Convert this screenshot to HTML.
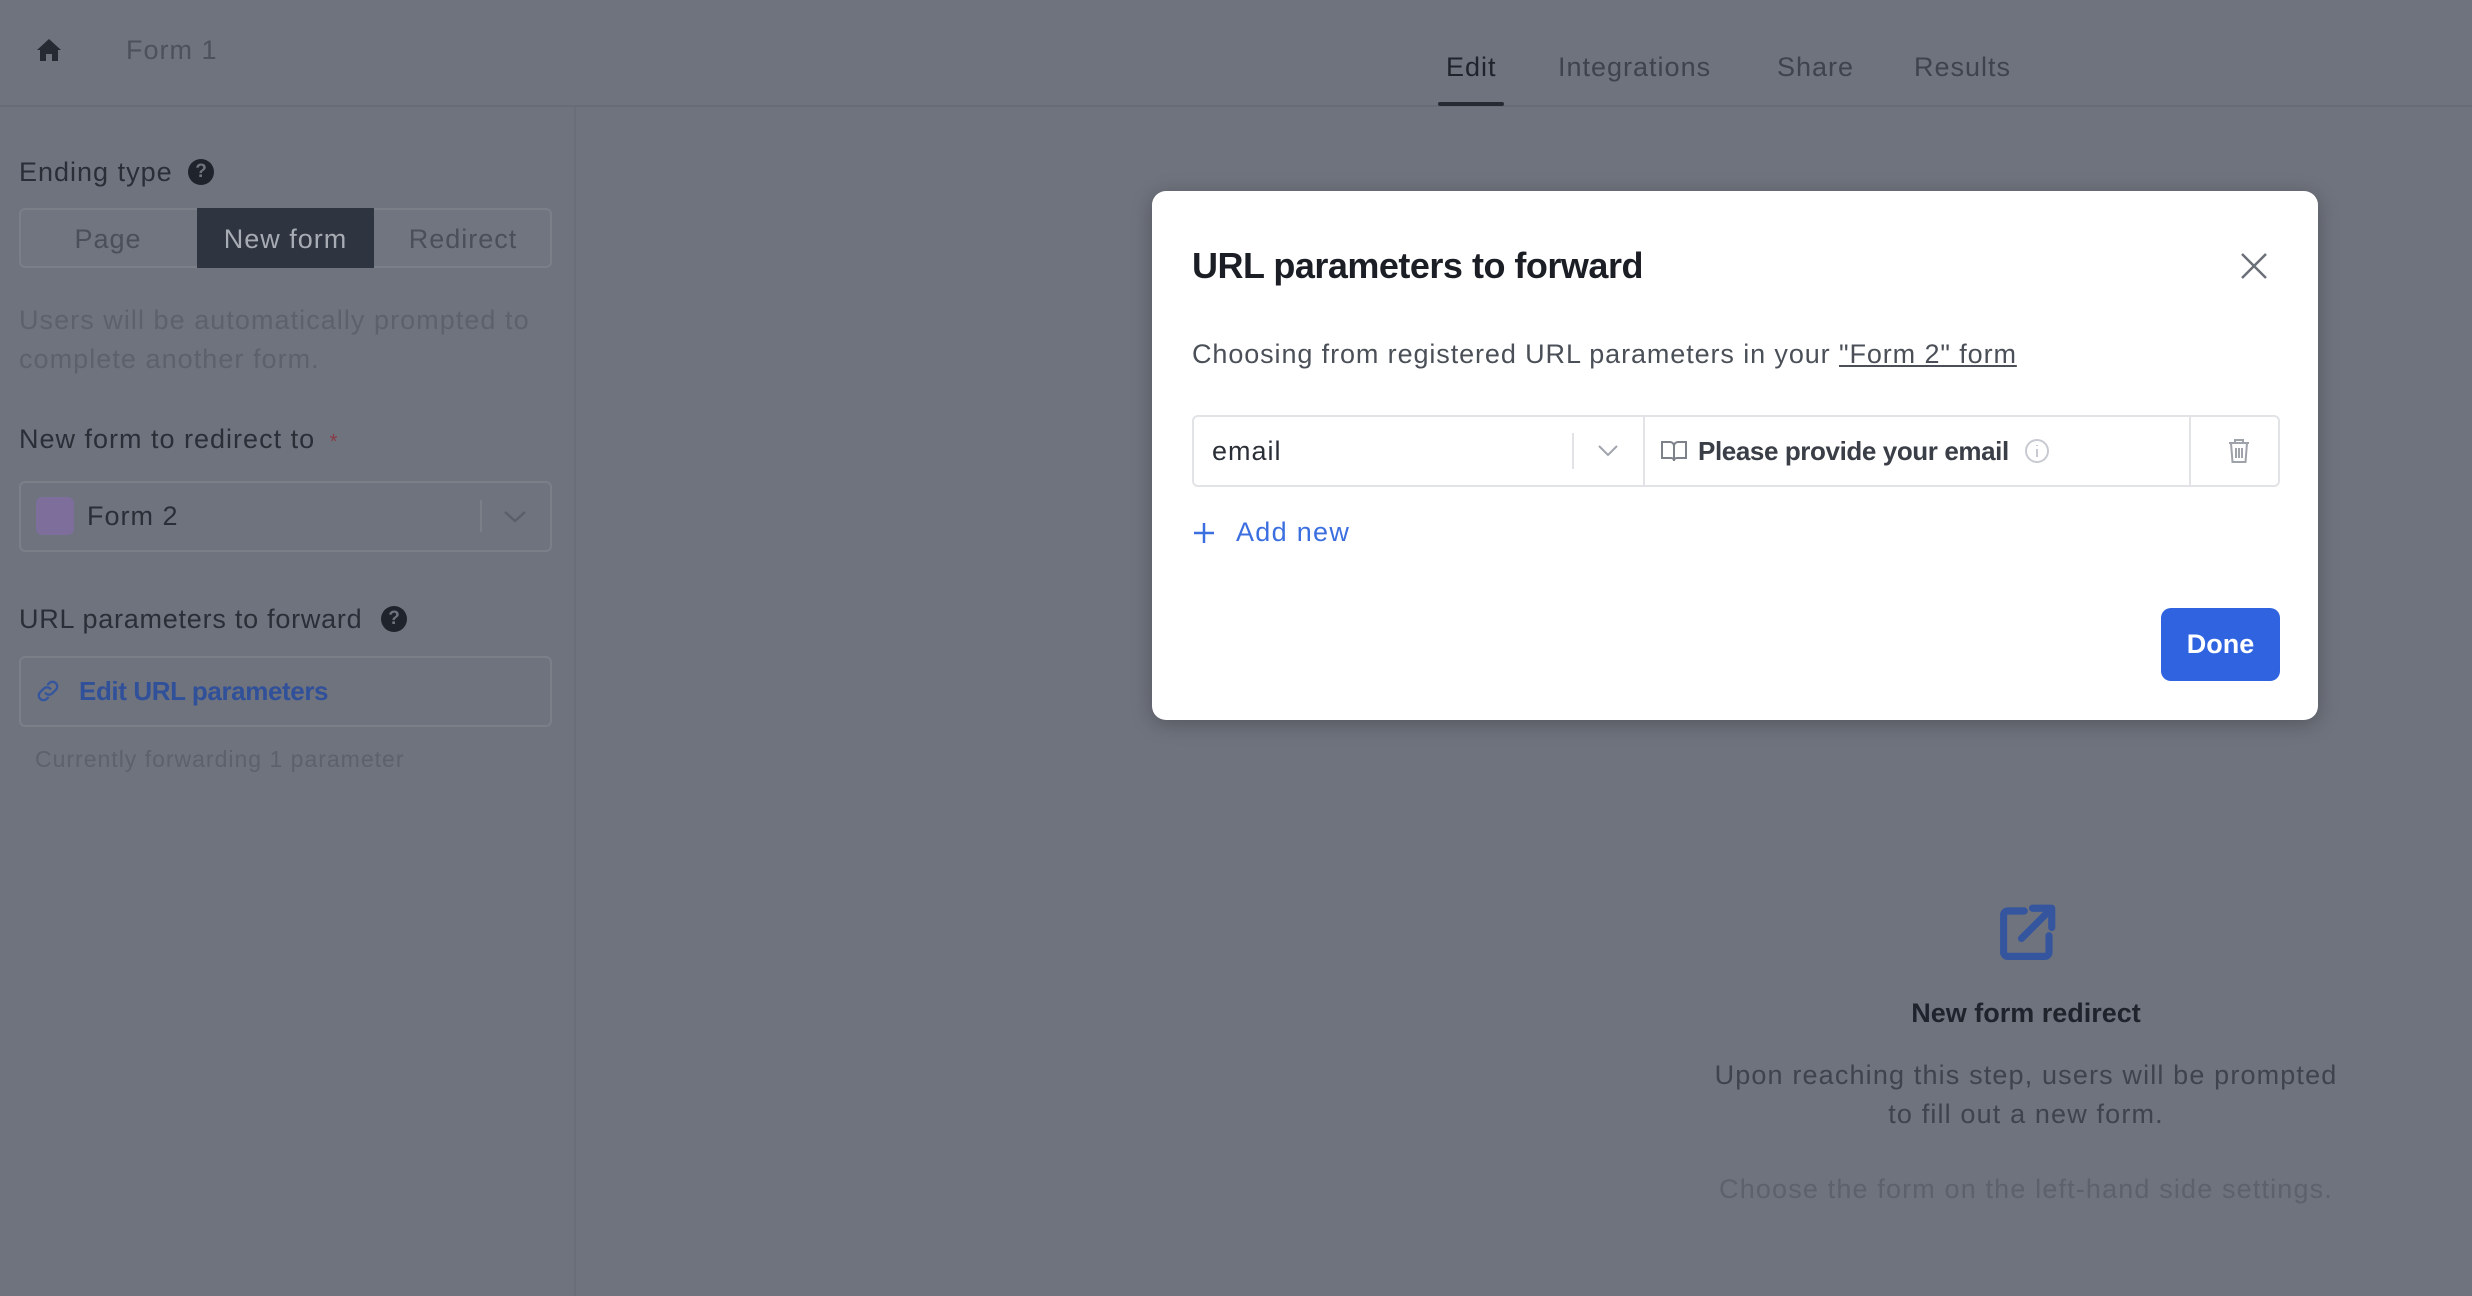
<!DOCTYPE html>
<html><head><meta charset="utf-8"><style>
*{box-sizing:border-box;margin:0;padding:0}
body{width:2472px;height:1296px;overflow:hidden;background:#6f737d;font-family:"Liberation Sans",sans-serif;position:relative;color:#23272f;letter-spacing:1px}
.a{position:absolute;white-space:nowrap}
b,.b{letter-spacing:0}
</style></head><body>
<div class="a" style="left:0;top:105px;width:2472px;height:2px;background:#686c76"></div>
<div class="a" style="left:574px;top:107px;width:2px;height:1189px;background:#6a6e78"></div>
<svg class="a" style="left:36px;top:38px" width="26" height="24" viewBox="0 0 26 24"><path d="M13 1 L1 12 H4 V23 H10 V16 H16 V23 H22 V12 H25 Z" fill="#262a33"/></svg>
<div class="a" style="left:126px;top:35px;font-size:27px;color:#4c515b">Form 1</div>
<div class="a" style="left:1446px;top:52px;font-size:27px;color:#1f232b">Edit</div>
<div class="a" style="left:1438px;top:102px;width:66px;height:4px;background:#262a33;border-radius:2px"></div>
<div class="a" style="left:1558px;top:52px;font-size:27px;color:#3e434d">Integrations</div>
<div class="a" style="left:1777px;top:52px;font-size:27px;color:#3e434d">Share</div>
<div class="a" style="left:1914px;top:52px;font-size:27px;color:#3e434d">Results</div>

<div class="a" style="left:19px;top:157px;font-size:27px;color:#2a2e37">Ending type</div>
<div class="a b" style="left:188px;top:159px;width:26px;height:26px;border-radius:50%;background:#1f232b;color:#6f737d;font-size:19px;font-weight:bold;text-align:center;line-height:26px">?</div>
<div class="a" style="left:19px;top:208px;width:533px;height:60px;border:2px solid #7b7f88;border-radius:6px;background:#71757f"></div>
<div class="a" style="left:197px;top:208px;width:177px;height:60px;background:#2e3440"></div>
<div class="a" style="left:19px;top:224px;width:178px;text-align:center;font-size:27px;color:#4a4f59">Page</div>
<div class="a" style="left:197px;top:224px;width:177px;text-align:center;font-size:27px;color:#a7abb3">New form</div>
<div class="a" style="left:374px;top:224px;width:178px;text-align:center;font-size:27px;color:#4a4f59">Redirect</div>
<div class="a" style="left:19px;top:301px;font-size:27px;line-height:39px;color:#5c616b;letter-spacing:1.05px">Users will be automatically prompted to<br>complete another form.</div>
<div class="a" style="left:19px;top:424px;font-size:27px;color:#2a2e37">New form to redirect to <span style="color:#8a3a44;font-size:20px;margin-left:6px">*</span></div>
<div class="a" style="left:19px;top:481px;width:533px;height:71px;border:2px solid #7b7f88;border-radius:6px"></div>
<div class="a" style="left:36px;top:497px;width:38px;height:38px;border-radius:6px;background:#7d6e9c"></div>
<div class="a" style="left:87px;top:501px;font-size:27px;color:#2a2e37">Form 2</div>
<div class="a" style="left:480px;top:500px;width:2px;height:32px;background:#7b7f88"></div>
<svg class="a" style="left:503px;top:510px" width="24" height="14"><path d="M2 2 L12 11 L22 2" stroke="#5a5f69" stroke-width="2.5" fill="none"/></svg>
<div class="a" style="left:19px;top:604px;font-size:27px;color:#2a2e37;letter-spacing:0.75px">URL parameters to forward</div>
<div class="a b" style="left:381px;top:606px;width:26px;height:26px;border-radius:50%;background:#1f232b;color:#6f737d;font-size:19px;font-weight:bold;text-align:center;line-height:26px">?</div>
<div class="a" style="left:19px;top:656px;width:533px;height:71px;border:2px solid #7b7f88;border-radius:6px"></div>
<svg class="a" style="left:34px;top:677px" width="28" height="28" viewBox="0 0 24 24"><path d="M10 14a4 4 0 0 0 5.7 0l3-3a4 4 0 0 0-5.7-5.7l-1 1M14 10a4 4 0 0 0-5.7 0l-3 3a4 4 0 0 0 5.7 5.7l1-1" stroke="#35569e" stroke-width="2" fill="none" stroke-linecap="round"/></svg>
<div class="a" style="left:79px;top:676px;font-size:26px;font-weight:bold;color:#30509a;letter-spacing:-0.4px">Edit URL parameters</div>
<div class="a" style="left:35px;top:746px;font-size:23px;color:#5c616b;letter-spacing:1.0px">Currently forwarding 1 parameter</div>

<svg class="a" style="left:1994px;top:900px" width="66" height="66" viewBox="0 0 24 24"><path d="M11 4H5a1.5 1.5 0 0 0-1.5 1.5v13.5a1.5 1.5 0 0 0 1.5 1.5h13.5a1.5 1.5 0 0 0 1.5-1.5V13M10 14L20.5 3.5M14 3h7v7" stroke="#35569e" stroke-width="2.6" fill="none" stroke-linecap="round" stroke-linejoin="round"/></svg>
<div class="a b" style="left:1626px;top:998px;width:800px;text-align:center;font-size:27px;font-weight:bold;color:#1f232b">New form redirect</div>
<div class="a" style="left:1626px;top:1056px;width:800px;text-align:center;font-size:27px;line-height:39px;color:#3e434d;letter-spacing:1.15px">Upon reaching this step, users will be prompted<br>to fill out a new form.</div>
<div class="a" style="left:1626px;top:1174px;width:800px;text-align:center;font-size:27px;color:#5c616b;letter-spacing:1.15px">Choose the form on the left-hand side settings.</div>

<div class="a" style="left:1152px;top:191px;width:1166px;height:529px;background:#fff;border-radius:14px;box-shadow:0 4px 20px rgba(0,0,0,0.25)"></div>
<div class="a b" style="left:1192px;top:245px;font-size:36px;font-weight:bold;color:#1b1e24;letter-spacing:-0.5px">URL parameters to forward</div>
<svg class="a" style="left:2240px;top:252px" width="28" height="28"><path d="M2 2L26 26M26 2L2 26" stroke="#6b7079" stroke-width="2.5"/></svg>
<div class="a" style="left:1192px;top:339px;font-size:27px;color:#4b5058;letter-spacing:0.9px">Choosing from registered URL parameters in your <span style="text-decoration:underline">"Form 2" form</span></div>
<div class="a" style="left:1192px;top:415px;width:1088px;height:72px;border:2px solid #e1e3e7;border-radius:6px"></div>
<div class="a" style="left:1643px;top:415px;width:2px;height:72px;background:#e1e3e7"></div>
<div class="a" style="left:2189px;top:415px;width:2px;height:72px;background:#e1e3e7"></div>
<div class="a" style="left:1572px;top:433px;width:2px;height:36px;background:#e1e3e7"></div>
<div class="a" style="left:1212px;top:436px;font-size:27px;color:#2a2e36">email</div>
<svg class="a" style="left:1597px;top:444px" width="22" height="14"><path d="M2 2L11 11L20 2" stroke="#a0a4ab" stroke-width="2" fill="none"/></svg>
<svg class="a" style="left:1660px;top:439px" width="28" height="24" viewBox="0 0 28 24"><path d="M2 3h8a4 4 0 0 1 4 4v15a3 3 0 0 0-3-3H2ZM26 3h-8a4 4 0 0 0-4 4v15a3 3 0 0 1 3-3h9Z" stroke="#7d828a" stroke-width="2" fill="none"/></svg>
<div class="a" style="left:1698px;top:436px;font-size:26px;font-weight:bold;color:#3a3e46;letter-spacing:-0.4px">Please provide your email</div>
<svg class="a" style="left:2024px;top:438px" width="26" height="26"><circle cx="13" cy="13" r="11" stroke="#c7cad0" stroke-width="2" fill="none"/><path d="M13 11v8M13 7v1" stroke="#c7cad0" stroke-width="2"/></svg>
<svg class="a" style="left:2226px;top:437px" width="26" height="28" viewBox="0 0 26 28"><path d="M3 6h20M9 6V3h8v3M5 6l1.5 19h13L21 6M10 11v10M13 11v10M16 11v10" stroke="#9ea2a9" stroke-width="2" fill="none"/></svg>
<svg class="a" style="left:1192px;top:521px" width="24" height="24"><path d="M12 2v20M2 12h20" stroke="#3b6fe0" stroke-width="2.5"/></svg>
<div class="a" style="left:1236px;top:517px;font-size:27px;color:#3b6fe0;letter-spacing:1.3px">Add new</div>
<div class="a b" style="left:2161px;top:608px;width:119px;height:73px;background:#2f63e0;border-radius:10px;color:#fff;font-size:27px;font-weight:bold;text-align:center;line-height:73px">Done</div>
</body></html>
